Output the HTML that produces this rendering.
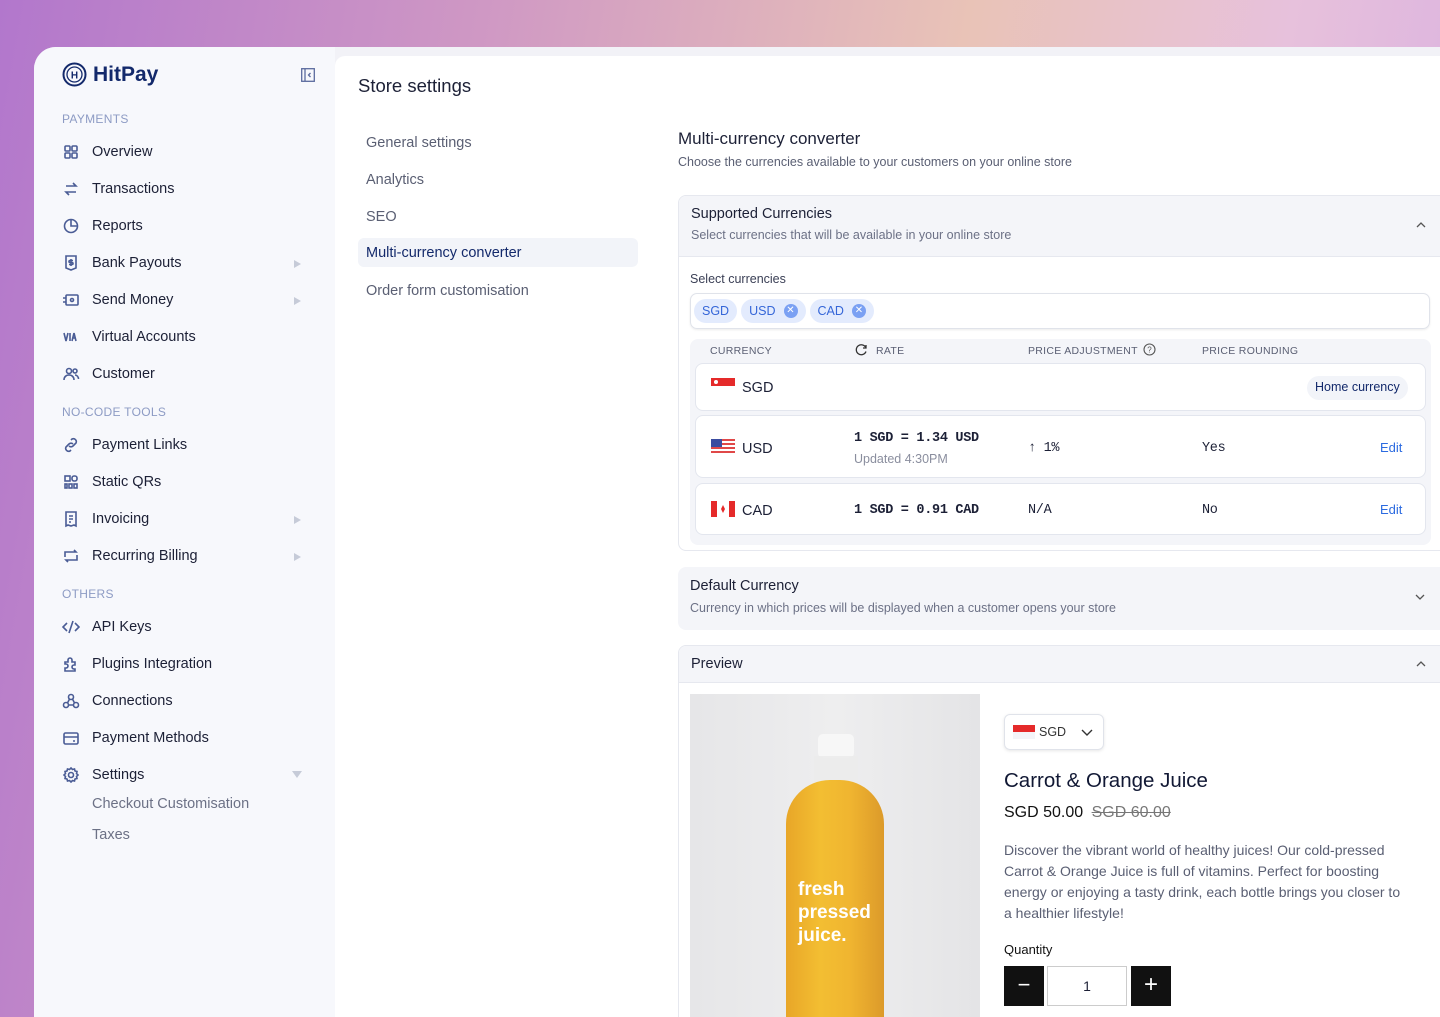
<!DOCTYPE html>
<html><head><meta charset="utf-8"><style>
*{box-sizing:border-box;margin:0;padding:0}
body{width:1440px;height:1017px;overflow:hidden;font-family:"Liberation Sans",sans-serif;color:#1c2036;background:linear-gradient(100deg,#b277cc 0%,#cf98c4 30%,#e9c3b7 60%,#e7c1dc 80%,#d6ace0 100%);position:relative}
.frame{position:absolute;left:34px;top:47px;right:0;bottom:0;background:#f2f2f7;border-top-left-radius:22px;overflow:hidden}
.side{position:absolute;left:0;top:0;width:301px;bottom:0;background:#f7f8fc}
.main{position:absolute;left:301px;top:9px;right:0;bottom:0;background:#fff;border-top-left-radius:10px}
.logo{position:absolute;left:28px;top:15px;display:flex;align-items:center;gap:6px;font-weight:bold;font-size:21px;color:#13296b}
.sec{position:absolute;left:28px;font-size:12px;color:#8d9bc4;letter-spacing:.3px}
.it{position:absolute;left:28px;font-size:14.5px;display:flex;align-items:center;color:#1c2036;margin-top:2px}
.it svg{width:18px;height:18px;margin-right:12px;stroke:#4a5c95;fill:none;stroke-width:1.6}
.arr{position:absolute;left:260px;width:0;height:0;border-left:7px solid #c6cbd8;border-top:4px solid transparent;border-bottom:4px solid transparent;margin-top:2px}
.sub{position:absolute;left:58px;font-size:14.5px;color:#6c7186;margin-top:1px}
.ab{position:absolute}
.nav{position:absolute;left:31px;font-size:14.5px;color:#5a5f73;margin-top:1px}
.card{position:absolute;left:343px;width:780px;border:1px solid #e6e8ef;border-radius:8px;background:#fff;overflow:hidden}
.ch{background:#f4f5f9;padding:10px 12px}
.ch b{display:block;font-weight:normal;font-size:14.5px;color:#1c2036}
.ch span{display:block;font-size:12.5px;color:#6c7186;margin-top:6px}
.tag{display:inline-flex;align-items:center;height:24px;padding:0 8px;border-radius:12px;background:#e3ebfd;color:#3566d8;font-size:12.5px;margin-right:4px}
.x{display:inline-block;width:14px;height:14px;border-radius:7px;background:#7aa0f3;color:#fff;font-size:10px;line-height:14px;text-align:center;margin-left:8px}
.row{position:absolute;left:16px;width:731px;background:#fff;border:1px solid #e3e6ee;border-radius:8px}
.mono{font-family:"Liberation Mono",monospace;font-size:13.5px;letter-spacing:-.3px}
.mb{font-weight:bold}
.th{position:absolute;top:149px;font-size:10.5px;color:#5a5f73;letter-spacing:.3px}
</style></head><body>
<div class="frame">
<div class="side">
 <div class="logo"><svg width="25" height="25" viewBox="0 0 25 25"><circle cx="12.5" cy="12.5" r="11" fill="none" stroke="#13296b" stroke-width="2"/><circle cx="12.5" cy="12.5" r="7.5" fill="none" stroke="#13296b" stroke-width="1.3"/><text x="12.5" y="16.5" font-size="10" text-anchor="middle" fill="#13296b" font-family="Liberation Sans" font-weight="bold">H</text></svg>HitPay</div>
 <svg class="ab" style="left:267px;top:21px" width="14" height="14" viewBox="0 0 14 14"><rect x=".7" y=".7" width="12.6" height="12.6" fill="none" stroke="#5a6a9e" stroke-width="1.3"/><path d="M4 1v12M9.5 5 7.5 7l2 2" fill="none" stroke="#5a6a9e" stroke-width="1.3"/></svg>
 <div class="sec" style="top:65px">PAYMENTS</div>
 <div class="it" style="top:94px"><svg viewBox="0 0 18 18"><rect x="3" y="3" width="5" height="5" rx="1"/><rect x="10" y="3" width="5" height="5" rx="1"/><rect x="3" y="10" width="5" height="5" rx="1"/><rect x="10" y="10" width="5" height="5" rx="1"/></svg>Overview</div>
 <div class="it" style="top:131px"><svg viewBox="0 0 18 18"><path d="M4 6h10l-3-3M14 12H4l3 3"/></svg>Transactions</div>
 <div class="it" style="top:168px"><svg viewBox="0 0 18 18"><circle cx="9" cy="9" r="6.5"/><path d="M9 2.5V9h6.5"/></svg>Reports</div>
 <div class="it" style="top:205px"><svg viewBox="0 0 18 18"><path d="M4 2h10v12l-5 2-5-2z"/><path d="M9 5v7M11 6.5H8a1 1 0 0 0 0 2h2a1 1 0 0 1 0 2H7"/></svg>Bank Payouts</div><div class="arr" style="top:211px"></div>
 <div class="it" style="top:242px"><svg viewBox="0 0 18 18"><rect x="4" y="4" width="12" height="10" rx="1"/><circle cx="10" cy="9" r="1.5"/><path d="M1 7h3M1 11h3"/></svg>Send Money</div><div class="arr" style="top:248px"></div>
 <div class="it" style="top:279px"><svg viewBox="0 0 18 18"><path d="M2 5l2 8 2-8M8 5v8M12 5l-2 8M12 5l2 8M10.5 10h3"/></svg>Virtual Accounts</div>
 <div class="it" style="top:316px"><svg viewBox="0 0 18 18"><circle cx="7" cy="6" r="2.5"/><path d="M2 15c0-3 2-5 5-5s5 2 5 5"/><circle cx="13" cy="6" r="2"/><path d="M13 10c2 0 3.5 2 3.5 4"/></svg>Customer</div>
 <div class="sec" style="top:358px">NO-CODE TOOLS</div>
 <div class="it" style="top:387px"><svg viewBox="0 0 18 18"><path d="M7 10a3 3 0 0 0 4 0l3-3a3 3 0 0 0-4-4l-1 1M11 8a3 3 0 0 0-4 0l-3 3a3 3 0 0 0 4 4l1-1"/></svg>Payment Links</div>
 <div class="it" style="top:424px"><svg viewBox="0 0 18 18"><rect x="3" y="3" width="5" height="5"/><rect x="3" y="11" width="2" height="4"/><rect x="10" y="3" width="5" height="5" rx="2"/><rect x="7" y="11" width="3" height="4"/><rect x="12" y="11" width="3" height="4"/></svg>Static QRs</div>
 <div class="it" style="top:461px"><svg viewBox="0 0 18 18"><path d="M4 2h10v14l-2-1-3 1-3-1-2 1z"/><path d="M7 6h4M7 9h4M7 12h2"/></svg>Invoicing</div><div class="arr" style="top:467px"></div>
 <div class="it" style="top:498px"><svg viewBox="0 0 18 18"><path d="M3 10V5h11l-2-2M15 8v5H4l2 2"/></svg>Recurring Billing</div><div class="arr" style="top:504px"></div>
 <div class="sec" style="top:540px">OTHERS</div>
 <div class="it" style="top:569px"><svg viewBox="0 0 18 18"><path d="M5 5 1 9l4 4M13 5l4 4-4 4M11 3 7 15"/></svg>API Keys</div>
 <div class="it" style="top:606px"><svg viewBox="0 0 18 18"><path d="M3 7h3V5a2 2 0 0 1 4 0v2h3v3h-1a2 2 0 0 0 0 4h1v2H3v-3h1a2 2 0 0 0 0-4H3z"/></svg>Plugins Integration</div>
 <div class="it" style="top:643px"><svg viewBox="0 0 18 18"><circle cx="9" cy="5" r="2.5"/><circle cx="4" cy="13" r="2.5"/><circle cx="14" cy="13" r="2.5"/><path d="M7.5 7 5.5 11M10.5 7l2 4M6.5 13h5"/></svg>Connections</div>
 <div class="it" style="top:680px"><svg viewBox="0 0 18 18"><rect x="2" y="4" width="14" height="11" rx="1.5"/><path d="M2 8h14M11 12h2"/></svg>Payment Methods</div>
 <div class="it" style="top:717px"><svg viewBox="0 0 18 18"><circle cx="9" cy="9" r="2.5"/><path d="M9 2l1.5 1.5 2-.5.5 2 2 .5-.5 2L16 9l-1.5 1.5.5 2-2 .5-.5 2-2-.5L9 16l-1.5-1.5-2 .5-.5-2-2-.5.5-2L2 9l1.5-1.5-.5-2 2-.5.5-2 2 .5z"/></svg>Settings</div>
 <div class="ab" style="left:258px;top:724px;width:0;height:0;border-top:7px solid #c6cbd8;border-left:5px solid transparent;border-right:5px solid transparent"></div>
 <div class="sub" style="top:748px">Checkout Customisation</div>
 <div class="sub" style="top:779px">Taxes</div>
</div>
<div class="main">
 <div class="ab" style="left:23px;top:19px;font-size:18.5px">Store settings</div>
 <div class="nav" style="top:78px">General settings</div>
 <div class="nav" style="top:115px">Analytics</div>
 <div class="nav" style="top:152px">SEO</div>
 <div class="ab" style="left:23px;top:182px;width:280px;height:29px;background:#f2f4f9;border-radius:6px;padding:7px 8px;font-size:14.5px;color:#13296b">Multi-currency converter</div>
 <div class="nav" style="top:226px">Order form customisation</div>
 <div class="ab" style="left:343px;top:73px;font-size:17px">Multi-currency converter</div>
 <div class="ab" style="left:343px;top:99px;font-size:12.5px;color:#5a5f73">Choose the currencies available to your customers on your online store</div>

 <div class="card" style="top:139px;height:356px">
  <div class="ch" style="height:61px;border-bottom:1px solid #e6e8ef"><b>Supported Currencies</b><span>Select currencies that will be available in your online store</span></div>
  <svg class="ab" style="left:736px;top:24px" width="12" height="10"><path d="M2 7l4-4 4 4" fill="none" stroke="#555" stroke-width="1.3"/></svg>
  <div class="ab" style="left:11px;top:76px;font-size:12.5px;color:#3a3f55">Select currencies</div>
  <div class="ab" style="left:11px;top:97px;width:740px;height:36px;border:1px solid #e0e3ea;border-radius:7px;box-shadow:0 1px 2px rgba(0,0,0,.08);padding:5px 3px;display:flex"><span class="tag">SGD</span><span class="tag">USD<span class="x">✕</span></span><span class="tag">CAD<span class="x">✕</span></span></div>
  <div class="ab" style="left:11px;top:143px;width:741px;height:206px;background:#f4f5f9;border-radius:8px"></div>
  <div class="th" style="left:31px">CURRENCY</div>
  <svg class="ab" style="left:176px;top:147px" width="13" height="13"><path d="M11 5A5 5 0 1 0 11 8.5M11 2v3H8" fill="none" stroke="#333" stroke-width="1.3"/></svg>
  <div class="th" style="left:197px">RATE</div>
  <div class="th" style="left:349px">PRICE ADJUSTMENT</div>
  <svg class="ab" style="left:464px;top:147px" width="13" height="13"><circle cx="6.5" cy="6.5" r="5.5" fill="none" stroke="#555" stroke-width="1.1"/><text x="6.5" y="9.5" font-size="8" text-anchor="middle" fill="#555">?</text></svg>
  <div class="th" style="left:523px">PRICE ROUNDING</div>
  <div class="row" style="top:167px;height:48px">
   <svg class="ab" style="left:15px;top:14px" width="24" height="16"><rect width="24" height="8" fill="#e52a2a"/><rect y="8" width="24" height="8" fill="#fff"/><circle cx="5" cy="4" r="2" fill="#fff"/></svg>
   <div class="ab" style="left:46px;top:16px;font-size:14.5px">SGD</div>
   <div class="ab" style="left:611px;top:12px;height:24px;padding:4px 8px;border-radius:12px;background:#f2f4f9;font-size:12.5px;color:#13296b">Home currency</div>
  </div>
  <div class="row" style="top:219px;height:63px">
   <svg class="ab" style="left:15px;top:23px" width="24" height="16"><rect width="24" height="16" fill="#fff"/><g fill="#e04848"><rect y="0" width="24" height="2"/><rect y="4" width="24" height="2"/><rect y="8" width="24" height="2"/><rect y="12" width="24" height="2"/></g><rect width="11" height="8" fill="#3b4ca0"/></svg>
   <div class="ab" style="left:46px;top:25px;font-size:14.5px">USD</div>
   <div class="ab mono mb" style="left:158px;top:15px">1 SGD = 1.34 USD</div>
   <div class="ab" style="left:158px;top:36px;font-size:12.5px;color:#8a8e9e">Updated 4:30PM</div>
   <div class="ab mono" style="left:332px;top:25px">↑ 1%</div>
   <div class="ab mono" style="left:506px;top:25px">Yes</div>
   <div class="ab" style="left:684px;top:24px;font-size:13px;color:#2b6ae0">Edit</div>
  </div>
  <div class="row" style="top:287px;height:52px">
   <svg class="ab" style="left:15px;top:17px" width="24" height="16"><rect width="24" height="16" fill="#fff"/><rect width="6" height="16" fill="#e52a2a"/><rect x="18" width="6" height="16" fill="#e52a2a"/><path d="M12 4l2 4-2 4-2-4z" fill="#e52a2a"/></svg>
   <div class="ab" style="left:46px;top:19px;font-size:14.5px">CAD</div>
   <div class="ab mono mb" style="left:158px;top:19px">1 SGD = 0.91 CAD</div>
   <div class="ab mono" style="left:332px;top:19px">N/A</div>
   <div class="ab mono" style="left:506px;top:19px">No</div>
   <div class="ab" style="left:684px;top:18px;font-size:13px;color:#2b6ae0">Edit</div>
  </div>
 </div>

 <div class="card" style="top:511px;height:63px;border:none">
  <div class="ch" style="height:63px"><b style="margin-top:1px">Default Currency</b><span style="margin-top:7px">Currency in which prices will be displayed when a customer opens your store</span></div>
  <svg class="ab" style="left:736px;top:25px" width="12" height="10"><path d="M2 3l4 4 4-4" fill="none" stroke="#555" stroke-width="1.3"/></svg>
 </div>

 <div class="card" style="top:589px;height:400px">
  <div class="ch" style="height:37px;border-bottom:1px solid #e6e8ef"><b>Preview</b></div>
  <svg class="ab" style="left:736px;top:13px" width="12" height="10"><path d="M2 7l4-4 4 4" fill="none" stroke="#555" stroke-width="1.3"/></svg>
  <div class="ab" style="left:11px;top:48px;width:290px;height:340px;background:linear-gradient(90deg,#e6e6e8,#eeeeef 50%,#e4e4e6);overflow:hidden">
   <div class="ab" style="left:128px;top:40px;width:36px;height:24px;background:#f7f7f7;border-radius:5px"></div>
   <div class="ab" style="left:124px;top:62px;width:44px;height:30px;background:rgba(235,235,235,.9)"></div>
   <div class="ab" style="left:96px;top:86px;width:98px;height:270px;border-radius:44px 44px 0 0;background:linear-gradient(90deg,#e8a628,#f3be32 35%,#f0b530 65%,#dc9a2a)"></div>
   <div class="ab" style="left:108px;top:184px;color:#fff;font-weight:bold;font-size:19px;line-height:23px">fresh<br>pressed<br>juice.</div>
  </div>
  <div class="ab" style="left:325px;top:68px;width:100px;height:36px;border:1px solid #e0e3ea;border-radius:6px;box-shadow:0 1px 3px rgba(0,0,0,.1)">
   <svg class="ab" style="left:8px;top:10px" width="22" height="14"><rect width="22" height="7" fill="#e52a2a"/><rect y="7" width="22" height="7" fill="#f4f4f8"/></svg>
   <div class="ab" style="left:34px;top:10px;font-size:12.5px;color:#333">SGD</div>
   <svg class="ab" style="left:76px;top:13px" width="12" height="10"><path d="M1 2l5 5 5-5" fill="none" stroke="#333" stroke-width="1.4"/></svg>
  </div>
  <div class="ab" style="left:325px;top:123px;font-size:20.5px;color:#111834">Carrot &amp; Orange Juice</div>
  <div class="ab" style="left:325px;top:158px;font-size:16px;color:#111">SGD 50.00 <span style="color:#777;text-decoration:line-through;margin-left:4px">SGD 60.00</span></div>
  <div class="ab" style="left:325px;top:194px;width:404px;font-size:14px;line-height:21px;color:#5a5f73">Discover the vibrant world of healthy juices! Our cold-pressed Carrot &amp; Orange Juice is full of vitamins. Perfect for boosting energy or enjoying a tasty drink, each bottle brings you closer to a healthier lifestyle!</div>
  <div class="ab" style="left:325px;top:296px;font-size:13px;color:#111">Quantity</div>
  <div class="ab" style="left:325px;top:320px;width:40px;height:40px;background:#111;color:#fff;text-align:center;font-size:22px;line-height:38px">−</div>
  <div class="ab" style="left:368px;top:320px;width:80px;height:40px;border:1px solid #ccc;text-align:center;font-size:14px;line-height:38px">1</div>
  <div class="ab" style="left:452px;top:320px;width:40px;height:40px;background:#111;color:#fff;text-align:center;font-size:24px;line-height:38px">+</div>
 </div>
</div>
</div>
</body></html>
